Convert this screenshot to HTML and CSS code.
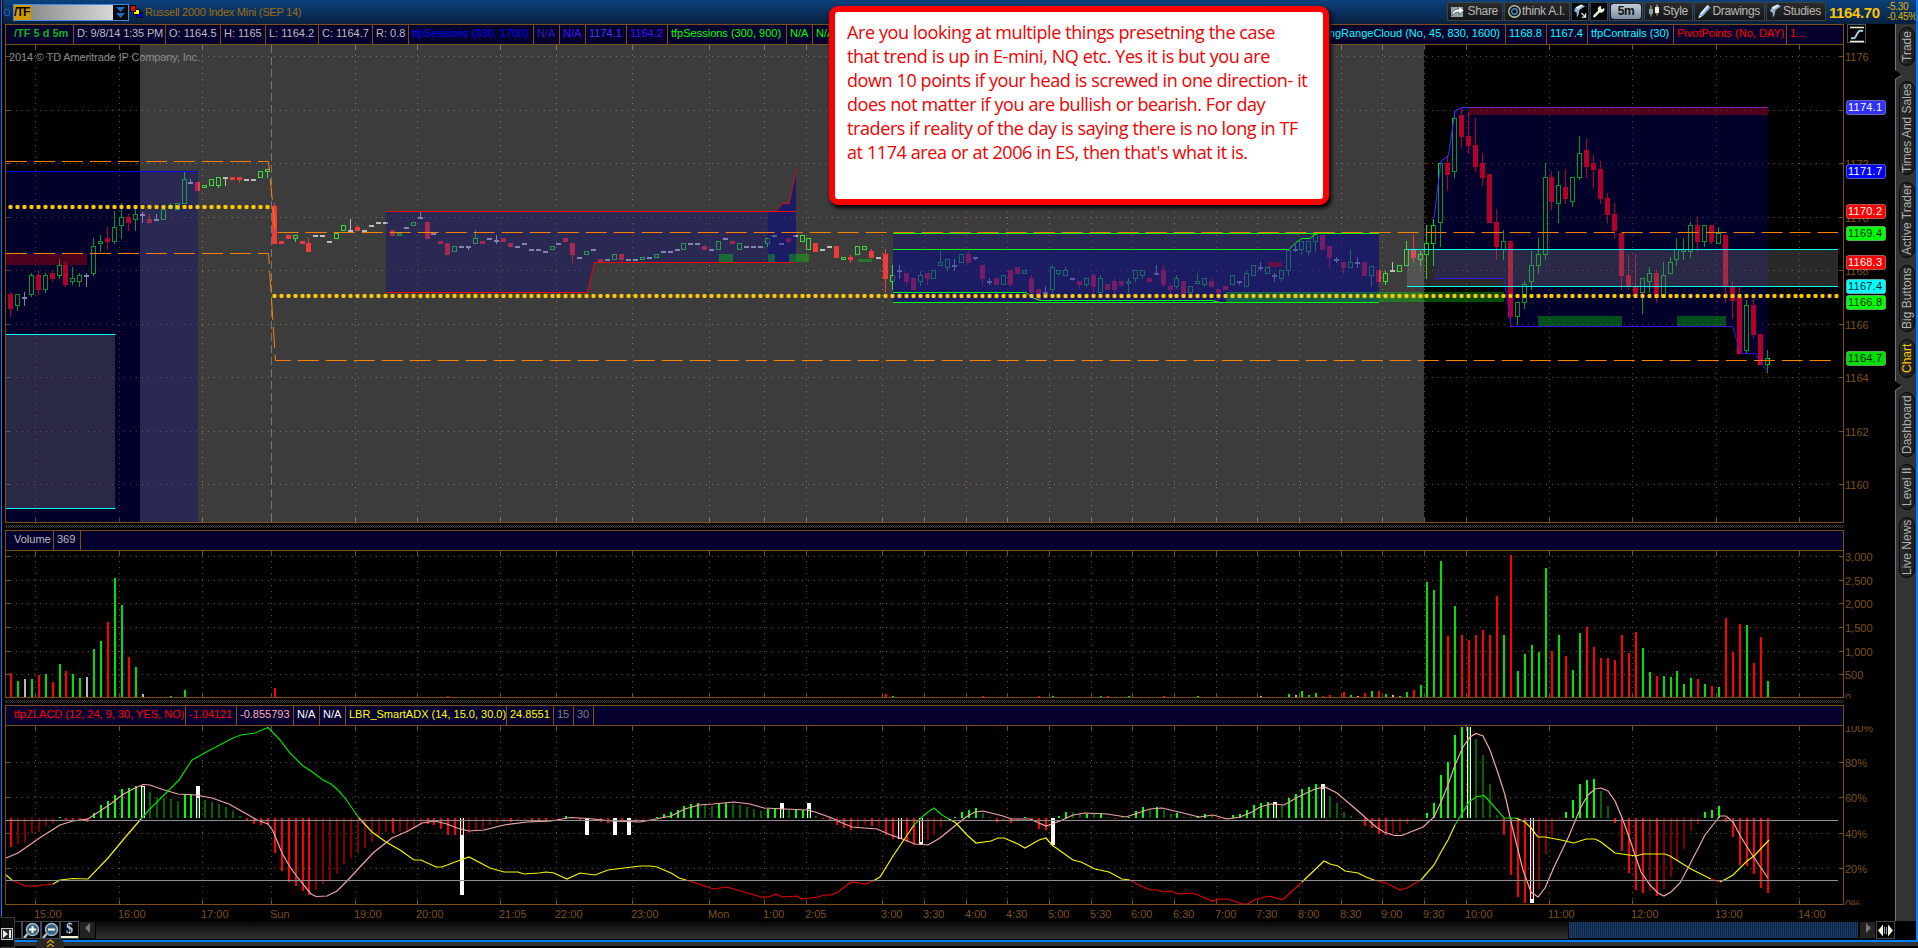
FILE: index.html
```html
<!DOCTYPE html>
<html lang="en">
<head>
  <meta charset="UTF-8" />
  <meta name="viewport" content="width=device-width, initial-scale=1.0"/>
  <title>/TF - Charts</title>
  <link rel="stylesheet" href="styles.css">
</head>
<body>
  <div class="window">
    <div class="topbar">
      <span class="pin"></span>
      <div class="symbol-box">
        <span class="symbol">/TF</span>
        <span class="symbol-fill"></span>
        <span class="symbol-drop">
          <svg width="15" height="15" viewBox="0 0 15 15"><path d="M3 2h9l-4.500 5zM3 8h9l-4.500 5z" fill="#1d6cc4"/></svg>
        </span>
      </div>
      <svg class="link-icon" width="13" height="14" viewBox="0 0 13 14">
        <rect x="6.500" y="7.500" width="6" height="5" fill="#0000ff" stroke="#000"/>
        <rect x="3.500" y="4.500" width="6" height="5" fill="#ffff00" stroke="#000"/>
        <rect x=".5" y=".5" width="5" height="6" fill="#ff0000" stroke="#000"/>
      </svg>
      <span class="title">Russell 2000 Index Mini (SEP 14)</span>

      <div class="toolbar">
        <div class="tool tool-share">
          <svg width="15" height="14" viewBox="0 0 15 14"><rect x="1" y="3" width="12" height="10" fill="#8fa3ad"/><path d="M2 12c0-5 3-7 7-7V2l5 4.500-5 4V8C6 8 4 9 2 12z" fill="#fff" stroke="#333" stroke-width=".6"/></svg>
          <span>Share</span>
        </div>
        <div class="tool tool-think">
          <svg width="15" height="15" viewBox="0 0 15 15"><circle cx="7.500" cy="7.500" r="5.800" fill="#101820" stroke="#b9c4a8" stroke-width="1.400"/><circle cx="7.500" cy="7.500" r="2.800" fill="none" stroke="#4f88b8" stroke-width="1.400"/></svg>
          <span>think A.I.</span>
        </div>
        <div class="tool tool-icon">
          <svg width="15" height="16" viewBox="0 0 15 16"><path d="M3 4l6-3 4 2-6 4-1 5-2 3v-5l-3-2z" fill="#8fb4cc"/><path d="M3 4l6-3 2 1-6 4z" fill="#e4eef4"/><path d="M9 10l4 4M13.500 10.500v4h-4" stroke="#eee" stroke-width="1.300" fill="none"/></svg>
        </div>
        <div class="tool tool-icon">
          <svg width="15" height="15" viewBox="0 0 15 15"><path d="M2.500 12.500L8 7" stroke="#dfe3d4" stroke-width="2.800" stroke-linecap="round"/><path d="M13 3.500A3.600 3.600 0 1 1 9.800 1.500L9.500 4l1.500 1.200z" fill="#eceee0"/></svg>
        </div>
        <div class="tool tool-period"><span>5m</span></div>
        <div class="tool tool-style">
          <svg width="14" height="14" viewBox="0 0 14 14"><path d="M4 1.500v11M10 .5v11" stroke="#b8cbb0"/><rect x="2" y="5" width="4" height="5" fill="#87a3b4"/><rect x="8" y="3" width="4" height="6" fill="#f0f2dc"/></svg>
          <span>Style</span>
        </div>
        <div class="tool tool-drawings">
          <svg width="15" height="15" viewBox="0 0 15 15"><path d="M1.500 14l1.500-4.500L10.500 1 13.500 3.500 6 12z" fill="#7fb0dd"/><path d="M3 9.500L10.500 1l1.500 1.200-7.500 8.500z" fill="#dcebf7"/><path d="M1.500 14l1-3 2 1.800z" fill="#fff"/></svg>
          <span>Drawings</span>
        </div>
        <div class="tool tool-studies">
          <svg width="15" height="16" viewBox="0 0 15 16"><path d="M3 4l6-3 4 2-6 4-1 5-2 3v-5l-3-2z" fill="#8fb4cc"/><path d="M3 4l6-3 2 1-6 4z" fill="#e4eef4"/></svg>
          <span>Studies</span>
        </div>
      </div>
      <span class="last-price">1164.70</span>
      <span class="change">-5.30<br>-0.45%</span>
    </div>

    <div class="main">
      <div class="charts">
        <div class="panel-head head-price">
          <span class="c-symbol">/TF 5 d 5m</span>
          <span class="tight">D: 9/8/14 1:35 PM</span>
          <span>O: 1164.5</span>
          <span>H: 1165</span>
          <span>L: 1164.2</span>
          <span>C: 1164.7</span>
          <span>R: 0.8</span>
          <span class="c-blue">tfpSessions (930, 1700)</span>
          <span class="c-navy">N/A</span>
          <span class="c-violet">N/A</span>
          <span class="c-bright">1174.1</span>
          <span class="c-violet">1164.2</span>
          <span class="c-green">tfpSessions (300, 900)</span>
          <span class="c-green">N/A</span>
          <span class="c-green c-wide"><i>N/A</i><i class="c-cyan">OpeningRangeCloud (No, 45, 830, 1600)</i></span>
          <span class="c-cyan">1168.8</span>
          <span class="c-cyan">1167.4</span>
          <span class="c-cyan">tfpContrails (30)</span>
          <span class="c-red">PivotPoints (No, DAY)</span>
          <span class="c-red">1...</span>
        </div>
        <svg id="price" class="plot" width="1892" height="478" viewBox="3 45 1892 478"></svg>
        <div class="splitter"></div>

        <div class="panel-head head-volume">
          <span>Volume</span>
          <span>369</span>
          <span></span>
        </div>
        <svg id="volume" class="plot" width="1892" height="147" viewBox="3 551 1892 147"></svg>
        <div class="splitter"></div>

        <div class="panel-head head-study">
          <span class="c-red">tfpZLACD (12, 24, 9, 30, YES, NO)</span>
          <span class="c-red">-1.04121</span>
          <span class="c-pink">-0.855793</span>
          <span class="c-white">N/A</span>
          <span class="c-white">N/A</span>
          <span class="c-yellow">LBR_SmartADX (14, 15.0, 30.0)</span>
          <span class="c-yellow">24.8551</span>
          <span class="c-gray">15</span>
          <span class="c-gray">30</span>
          <span></span>
        </div>
        <svg id="study" class="plot" width="1892" height="195" viewBox="3 726 1892 195"></svg>

        <div class="scale-button">
          <svg width="18" height="19" viewBox="0 0 18 19"><path d="M2 2.500h14M2 16.500h14" stroke="#f4f4d8" stroke-width="1.600"/><path d="M3 13c5 1 4-1 6-4s2-4 6-3" fill="none" stroke="#a9d0e4" stroke-width="2"/></svg>
        </div>
      </div>

      <div class="sidebar">
        <div class="tab tab-trade">Trade</div>
        <div class="tab tab-times">Times And Sales</div>
        <div class="tab tab-active">Active Trader</div>
        <div class="tab tab-big">Big Buttons</div>
        <div class="tab tab-chart">Chart</div>
        <div class="tab tab-dash">Dashboard</div>
        <div class="tab tab-level">Level II</div>
        <div class="tab tab-news">Live News</div>
        <svg class="notch notch-top" width="8" height="10" viewBox="0 0 8 10"><path d="M0 0l7 5-7 4z" fill="#000"/><path d="M1 9l6-4" stroke="#777"/></svg>
        <svg class="notch notch-mid" width="8" height="10" viewBox="0 0 8 10"><path d="M0 0l7 5-7 4z" fill="#000"/><path d="M1 9l6-4" stroke="#777"/></svg>
      </div>
    </div>

    <div class="scrollbar">
      <span class="zoom-btn zoom-cut"></span>
      <span class="zoom-btn">
        <svg width="17" height="17" viewBox="0 0 17 17"><path d="M4.500 12L1 16" stroke="#b8c8d4" stroke-width="2.400"/><circle cx="9.500" cy="7.500" r="6" fill="#356488" stroke="#a4bccc" stroke-width="1.400"/><path d="M9.500 4v7M6 7.500h7" stroke="#ffffd8" stroke-width="2"/></svg>
      </span>
      <span class="zoom-btn">
        <svg width="17" height="17" viewBox="0 0 17 17"><path d="M4.500 12L1 16" stroke="#b8c8d4" stroke-width="2.400"/><circle cx="9.500" cy="7.500" r="6" fill="#356488" stroke="#a4bccc" stroke-width="1.400"/><path d="M6 7.500h7" stroke="#ffffd8" stroke-width="2"/></svg>
      </span>
      <span class="zoom-btn zoom-dollar">$</span>
      <span class="arrow-btn"><svg width="6" height="10" viewBox="0 0 6 10"><path d="M5 0v10L0 5z" fill="#777"/></svg></span>
      <span class="track"></span>
      <span class="thumb"></span>
      <span class="arrow-btn"><svg width="6" height="10" viewBox="0 0 6 10"><path d="M1 0v10l5-5z" fill="#777"/></svg></span>
      <span class="zoom-btn zoom-split">
        <svg width="15" height="13" viewBox="0 0 15 13"><path d="M0 6.500L5 .5v12zM15 6.500l-5-6v12z" fill="#eef6dc"/><path d="M6.500 3v7M8.500 3v7" stroke="#7aa4c8"/></svg>
      </span>
    </div>
    <div class="footer"></div>

    <div class="collapse">
      <svg width="12" height="12" viewBox="0 0 12 12"><rect x=".5" y=".5" width="11" height="11" fill="#222" stroke="#ccc"/><path d="M2 2l5 4-5 4z" fill="#eee"/><path d="M9 2v8" stroke="#eee" stroke-width="2"/></svg>
    </div>
    <div class="drawer">
      <svg width="9" height="8" viewBox="0 0 9 8"><path d="M1 4l3.500-3L8 4M1 8l3.500-3L8 8" stroke="#d9a400" stroke-width="1.300" fill="none"/></svg>
    </div>

    <div class="note">
      Are you looking at multiple things presetning the case<br>
      that trend is up in E-mini, NQ etc. Yes it is but you are<br>
      down 10 points if your head is screwed in one direction- it<br>
      does not matter if you are bullish or bearish. For day<br>
      traders if reality of the day is saying there is no long in TF<br>
      at 1174 area or at 2006 in ES, then that's what it is.
    </div>
  </div>

  <script src="chart.js"></script>
</body>
</html>
```
FILE: styles.css
```css
body {
  margin: 0;
  background-color: #000;
  font-family: "Liberation Sans", Arial, sans-serif;
  font-size: 11px;
  color: #bdbdbd;
  overflow: hidden;
}
.window {
  position: relative;
  width: 1918px;
  height: 948px;
  box-sizing: border-box;
  border-left: 1px solid #000;
  display: flex;
  flex-direction: column;
  overflow: hidden;
}
.topbar {
  height: 24px;
  flex: none;
  display: flex;
  align-items: center;
  margin-left: 2px;
  background: linear-gradient(#0b417c, #0a2d58 60%, #071f3d);
  white-space: nowrap;
}
.pin {
  width: 4px;
  height: 5px;
  margin-left: 1px;
  border: 1px solid #1565b8;
  border-radius: 2px;
}
.symbol-box {
  display: flex;
  width: 114px;
  height: 15px;
  margin-left: 3px;
  border: 1px solid #3f8be0;
}
.symbol {
  width: 17px;
  background-color: #d09a00;
  color: #000;
  font-size: 12px;
  font-weight: bold;
  line-height: 15px;
  letter-spacing: -0.8px;
}
.symbol-fill {
  flex: 1;
  background: linear-gradient(90deg, #8c8c8c, #d8d8d8);
}
.symbol-drop {
  width: 15px;
  background-color: #0a0a0a;
}
.symbol-drop svg {
  display: block;
}
.link-icon {
  margin-left: 1px;
}
.title {
  margin-left: 2px;
  width: 160px;
  color: #a06d0c;
  letter-spacing: -0.25px;
}
.toolbar {
  display: flex;
  gap: 1px;
  margin-left: auto;
  height: 19px;
  padding-bottom: 2px;
}
.tool {
  box-sizing: border-box;
  height: 19px;
  display: flex;
  align-items: center;
  justify-content: space-between;
  padding: 0 4px 0 2px;
  border: 1px solid #3c4148;
  background: linear-gradient(#2a2a2a, #161616);
  font-size: 12px;
  letter-spacing: -0.3px;
  color: #b8b8b8;
}
.tool-share {
  width: 56px;
}
.tool-think {
  width: 66px;
}
.tool-icon {
  width: 18px;
  padding: 0 1px;
  background: #000;
}
.tool-period {
  width: 34px;
  padding: 1px;
}
.tool-period span {
  flex: 1;
  border-radius: 3px;
  background: linear-gradient(#c2ccd6, #7d8fa2);
  color: #111;
  font-weight: bold;
  text-align: center;
  line-height: 15px;
}
.tool-style {
  width: 49px;
}
.tool-drawings {
  width: 71px;
}
.tool-studies {
  width: 60px;
}
.last-price {
  width: 54px;
  margin-left: 3px;
  color: #ffc400;
  font-size: 15px;
  font-weight: bold;
  letter-spacing: -0.4px;
}
.change {
  width: 31px;
  margin-left: 4px;
  color: #e0b000;
  font-size: 10px;
  line-height: 10px;
  letter-spacing: -0.3px;
}
.main {
  flex: none;
  height: 897px;
  margin-left: 2px;
  display: flex;
}
.charts {
  position: relative;
  width: 1892px;
  background-color: #000;
}
.plot {
  display: block;
}
.panel-head {
  display: grid;
  box-sizing: border-box;
  width: 1839px;
  height: 21px;
  margin-left: 2px;
  border: 1px solid #7c4f1a;
  background-color: #05002d;
  line-height: 16px;
  white-space: nowrap;
  overflow: hidden;
}
.panel-head span {
  padding-left: 3px;
  border-right: 1px solid #7c4f1a;
  overflow: hidden;
}
.panel-head span:first-child {
  padding-left: 8px;
}
.panel-head span:last-child {
  border-right: none;
}
.panel-head .tight {
  letter-spacing: -0.15px;
}
.panel-head i {
  font-style: normal;
}
.head-price {
  grid-template-columns: 68px 92px 55px 45px 53px 54px 36px 125px 26px 26px 41px 41px 119px 26px 693px 41px 41px 86px 113px 1fr;
}
.head-volume {
  grid-template-columns: 48px 27px 1fr;
}
.head-study {
  grid-template-columns: 180px 51px 57px 26px 26px 161px 47px 20px 20px 1fr;
}
.c-wide {
  display: flex;
  justify-content: space-between;
  padding-right: 5px;
}
.c-symbol {
  color: #10b020;
  font-weight: bold;
}
.c-blue {
  color: #0000ff;
}
.c-navy {
  color: #2222b8;
}
.c-violet {
  color: #3c14ff;
}
.c-bright {
  color: #3a3aff;
}
.c-green {
  color: #00ff00;
}
.c-cyan {
  color: #00ffff;
}
.c-red {
  color: #ff0000;
}
.c-pink {
  color: #ffb0b0;
}
.c-white {
  color: #fff;
}
.c-yellow {
  color: #ffff00;
}
.c-gray {
  color: #808080;
}
.splitter {
  height: 3px;
  width: 1839px;
  margin: 0 0 0 2px;
  padding: 0;
  border-top: 2px solid #000;
  border-bottom: 2px solid #000;
  background: repeating-conic-gradient(#3c3c3c 0 25%, #000 0 50%) 0 0 / 2px 2px;
}
.scale-button {
  position: absolute;
  left: 1844px;
  top: 0;
  width: 17px;
  height: 17px;
  border: 1px solid #4a5560;
  background-color: #000;
}
.scale-button svg {
  display: block;
}
.sidebar {
  position: relative;
  box-sizing: border-box;
  width: 21px;
  padding-top: 3px;
  border-left: 1px solid #777;
  background-color: #333;
}
.tab {
  box-sizing: border-box;
  width: 16px;
  margin-left: 3px;
  border: 1px solid #080808;
  border-radius: 8px;
  background: linear-gradient(90deg, #1c1c1c, #2b2b2b);
  color: #b0b0b0;
  font-size: 12px;
  line-height: 14px;
  text-align: center;
  white-space: nowrap;
  writing-mode: vertical-rl;
  transform: rotate(180deg);
}
.tab-trade {
  height: 39px;
  margin-bottom: 15px;
}
.tab-times {
  height: 94px;
  margin-bottom: 7px;
}
.tab-active {
  height: 76px;
  margin-bottom: 7px;
}
.tab-big {
  height: 67px;
  margin-bottom: 7px;
}
.tab-chart {
  height: 39px;
  margin-bottom: 14px;
  color: #ffc800;
}
.tab-dash {
  height: 65px;
  margin-bottom: 7px;
}
.tab-level {
  height: 46px;
  margin-bottom: 7px;
}
.tab-news {
  height: 61px;
}
.notch {
  position: absolute;
  left: -1px;
}
.notch-top {
  top: 46px;
}
.notch-mid {
  top: 357px;
}
.scrollbar {
  flex: none;
  display: flex;
  height: 19px;
  margin-left: 14px;
  width: 1880px;
  background-color: #000;
}
.zoom-btn {
  box-sizing: border-box;
  width: 19px;
  height: 18px;
  border: 1px solid #3c4854;
  background-color: #000;
  overflow: hidden;
}
.zoom-cut {
  width: 7px;
  border-left: none;
}
.zoom-dollar {
  color: #a8cce8;
  font-family: "Liberation Serif", "Times New Roman", serif;
  font-size: 14px;
  font-weight: bold;
  line-height: 14px;
  text-align: center;
  box-shadow: inset 0 -3px 0 -1px #f0f0d8;
}
.zoom-split svg {
  margin: 2px 1px;
}
.arrow-btn {
  width: 15px;
  height: 16px;
  margin: 1px 1px 0;
  background-color: #222;
  text-align: center;
  line-height: 15px;
}
.track {
  flex: 1;
  height: 18px;
  background: linear-gradient(#050505, #333);
}
.thumb {
  width: 289px;
  height: 16px;
  margin: 1px 1px 0;
  background: repeating-linear-gradient(90deg, #1c3f6c 0 1px, #0d2440 1px 2px);
}
.footer {
  flex: none;
  height: 4px;
  margin-left: 14px;
  border-top: 2px solid #0080ff;
  border-bottom: 2px solid #000;
  background-color: #333;
}
.window::before,
.window::after {
  content: "";
  position: absolute;
  top: 0;
  width: 1px;
  height: 917px;
  background-color: #0080ff;
}
.window::before {
  left: 0;
}
.window::after {
  right: 0;
  width: 2px;
  height: 942px;
}
.collapse {
  position: absolute;
  left: -1px;
  top: 917px;
  width: 13px;
  height: 29px;
  border: 1px solid #3a3a3a;
  background-color: #0a0a0a;
}
.collapse svg {
  margin-top: 10px;
}
.drawer {
  position: absolute;
  left: 35px;
  top: 939px;
  width: 28px;
  height: 9px;
  border-radius: 5px 5px 0 0;
  background-color: #262626;
  text-align: center;
  line-height: 9px;
}
.note {
  position: absolute;
  left: 828px;
  top: 6px;
  box-sizing: border-box;
  width: 500px;
  height: 199px;
  padding: 8px 0 0 12px;
  border: 6px solid #ff0000;
  border-radius: 9px;
  background-color: #fff;
  box-shadow: 2px 3px 4px #000;
  color: #f00000;
  font-family: "Open Sans", "Noto Sans", sans-serif;
  font-size: 18px;
  line-height: 24px;
  letter-spacing: -0.4px;
  white-space: nowrap;
}
text {
  font-family: "Liberation Sans", Arial, sans-serif;
  font-size: 11px;
}
.axis-text {
  fill: #7f5217;
}
.mark {
  fill: #8c8c8c;
}
.crisp {
  shape-rendering: crispEdges;
}
```
FILE: chart.js
```js
const NS = "http://www.w3.org/2000/svg";
const BROWN = "#7c4f1a";
const RIGHT = 1843.5;

const COLORS = {
  r: "#ff0000",
  g: "#00e000",
  w: "#b8b8b8",
  d: "#006400",
  m: "#800000"
};

function add(parent, tag, attrs, text) {
  const el = document.createElementNS(NS, tag);
  for (const key in attrs) el.setAttribute(key, attrs[key]);
  if (text !== undefined) el.textContent = text;
  parent.appendChild(el);
  return el;
}

function rect(parent, x1, y1, x2, y2, fill) {
  add(parent, "rect", { x: x1, y: y1, width: x2 - x1, height: y2 - y1, fill: fill, class: "crisp" });
}

function line(parent, points, stroke, extra) {
  return add(parent, "polyline", Object.assign({ points: points, fill: "none", stroke: stroke }, extra || {}));
}

function barX(i) {
  return Math.floor(10.4 + i * 6.944);
}

const timeTicks = [
  [35.5, "15:00"], [119.5, "16:00"], [202.5, "17:00"], [271.5, "Sun"], [355.5, "19:00"], [417.5, "20:00"],
  [500.5, "21:05"], [556.5, "22:00"], [632.5, "23:00"], [709.5, "Mon"], [764.5, "1:00"], [806.5, "2:05"],
  [882.5, "3:00"], [924.5, "3:30"], [966.5, "4:00"], [1007.5, "4:30"], [1049.5, "5:00"], [1091.5, "5:30"],
  [1132.5, "6:00"], [1174.5, "6:30"], [1216.5, "7:00"], [1257.5, "7:30"], [1299.5, "8:00"], [1341.5, "8:30"],
  [1382.5, "9:00"], [1424.5, "9:30"], [1466.5, "10:00"], [1549.5, "11:00"], [1632.5, "12:00"], [1716.5, "13:00"],
  [1799.5, "14:00"]
];

// frame, dotted grid, ticks and right hand labels of one panel
function drawGrid(svg, top, bottom, levels, dayLine) {
  levels.forEach(([y, label]) => {
    if (label !== "0" && label !== "0%" && label !== "100%") {
      line(svg, `16,${y} 1830,${y}`, BROWN, { "stroke-dasharray": "1 5", class: "crisp" });
      line(svg, `6,${y} 11,${y}`, BROWN, { class: "crisp" });
      line(svg, `1839,${y} 1843,${y}`, BROWN, { class: "crisp" });
    }
    add(svg, "text", { x: 1845, y: y + 4.5, class: "axis-text" }, label);
  });
  timeTicks.forEach(([x, label]) => {
    if (label === "Sun" && dayLine) {
      line(svg, `${x},${top} ${x},${bottom}`, "#555", { "stroke-dasharray": "8 4", class: "crisp" });
    } else {
      line(svg, `${x},${top + 4} ${x},${bottom}`, BROWN, { "stroke-dasharray": "1 5", class: "crisp" });
    }
    line(svg, `${x},${top} ${x},${top + 5}`, BROWN, { class: "crisp" });
    line(svg, `${x},${bottom - 4} ${x},${bottom}`, BROWN, { class: "crisp" });
  });
}

function drawFrame(svg, top, bottom) {
  line(svg, `5.5,${top} 5.5,${bottom} ${RIGHT},${bottom} ${RIGHT},${top}`, BROWN, { class: "crisp" });
}

/* ---------- price ---------- */

// colour, then high / body top / body bottom / low, or only the body
const candles = `r 292 294 309 317|g 294 294 306 311|w 292 297 299 306|g 273 275 295 297|r 270 275 290 295|g 273 275 290 293
r 270 273 279 282|g 259 265 276 279|r 262 265 285 287|g 267 278 282 285|g 273 275 282 287|w 273 275 277 287
g 238 246 274 276|g 235 241 244 252|r 227 238 242 250|g 211 227 242 244|g 203 217 226 239|r 214 217 223 231
g 206 214 220 231|w 212 214 216 223|r 214 219 223 223|w 214 219 221 221|g 209 220|g 203 205 209 209
g 203 210|g 172 179 204 204|w 179 182 184 184|r 182 191|g 185 188|g 179 186
g 177 177 186 188|w 177 177 179 186|r 177 180|r 177 177 180 183|w 179 181|w 179 181
g 171 178|g 169 169 172 178|r 203 206 244 244|r 241 244|r 235 239|g 235 235 239 242
r 241 244|r 238 243 252 252|w 235 237|w 235 237|w 241 243|g 233 239
g 225 231|w 219 230 232 232|r 225 227 231 231|w 230 232|w 225 227|w 222 224
w 222 224|r 230 236|g 233 236|w 227 229|g 222 226|w 212 217 219 219
r 222 239|w 233 235|r 241 244|r 243 255|g 246 252|w 246 248
w 246 246 248 250|g 230 238 244 244|r 241 244|w 238 240|w 235 240 242 244|r 238 242
r 243 247|w 246 248|w 243 245|w 249 251|w 249 251|w 251 253
g 246 250|w 243 245|r 238 242|r 243 243 255 263|w 257 259|g 251 255
w 249 251|r 259 262|w 259 261|g 254 260|r 254 254 260 262|w 259 261
w 259 261|g 257 260|w 257 259|g 254 258|w 251 253|w 251 253
w 249 251|g 243 250|w 243 245|w 243 245|r 246 250|w 249 251
g 241 250|w 238 240|r 241 244|g 243 250|w 246 248|w 246 248
w 246 248|g 238 238 244 247|w 235 237|w 243 245|r 238 238 242 244|w 235 237
g 235 242|g 238 250|r 243 252|w 249 251|w 246 248|r 246 258
g 257 260|r 255 257 260 263|g 246 255|g 246 250|r 249 251 258 258|w 257 259
r 249 254 279 293|g 265 275 282 290|w 265 270 272 279|r 273 273 282 287|r 278 290|g 271 275 282 286
r 273 273 279 285|g 270 279|g 251 262 266 266|g 259 259 268 271|w 259 265 267 271|g 254 263
r 251 254 263 263|w 257 257 259 260|r 265 265 279 285|w 278 281 283 285|r 278 285|g 275 285
r 270 270 285 287|r 267 274|g 270 274|r 275 278 293 297|r 289 300|w 286 292 294 294
g 265 267 290 293|g 270 270 274 276|g 267 270 276 276|w 278 280|r 281 281 285 289|g 278 278 285 287
r 273 275 287 293|g 275 278 293 293|r 284 290|r 278 281 290 293|r 281 281 285 287|g 278 281 284 293
g 270 270 279 282|g 270 270 276 279|r 278 282|w 265 273 275 275|r 265 270 285 287|r 284 286 290 294
g 275 278 287 289|r 281 295|g 286 286 293 294|g 273 281 284 284|g 278 278 285 287|r 278 281 287 287
r 289 289 293 302|r 286 290|g 275 285|w 281 281 283 285|g 270 273 287 287|g 265 276
w 262 267 269 271|g 267 274|w 273 275 277 282|g 270 270 279 282|g 250 250 271 276|w 244 249 251 252
g 241 241 250 255|g 241 241 252 255|g 234 234 242 252|r 235 250|r 246 246 258 268|w 257 259 261 263
r 262 262 268 274|g 249 262 268 268|w 257 262 264 268|r 262 276|g 266 266 276 287|r 270 270 282 287
g 271 273 282 285|w 262 270 272 272|g 265 272|g 241 249 266 266|r 235 249 258 263|g 251 254 260 266
g 225 243 255 279|g 219 225 244 266|g 163 163 223 247|r 156 163 175 191|g 111 118 172 178|r 108 115 137 148
r 112 136 146 154|r 118 145 167 172|r 153 163 178 186|r 174 223|r 209 222 247 260|g 230 241 250 260
r 241 241 317 327|g 302 302 317 325|g 281 284 303 309|g 251 265 282 290|g 238 254 266 274|g 163 177 255 260
r 171 177 202 210|g 171 185 204 223|r 169 187 199 204|g 177 177 202 207|g 136 153 178 180|r 139 150 167 178
r 155 163 170 188|r 161 169 199 204|r 193 198 215 223|r 203 214 231 239|r 233 233 276 290|r 254 275 286 290
r 254 286 295 295|g 278 278 293 314|g 267 273 282 293|r 270 273 298 303|g 262 275 298 298|g 257 262 274 274
g 238 249 260 266|g 238 249 252 260|g 222 225 252 258|r 217 225 242 252|g 225 225 242 247|r 225 225 242 244
g 227 233 244 244|r 235 235 286 303|r 281 286 301 319|r 286 297 354 354|g 300 305 351 353|r 297 305 335 338
r 334 365|g 350 358 365 373`.split(/[|\n]/);

function drawPrice() {
  const svg = document.getElementById("price");
  const navy = "rgba(0,0,144,0.3)";
  const cloud = "rgba(135,135,135,0.3)";
  const green = "rgba(0,255,0,0.3)";
  const red = "rgba(255,0,0,0.3)";

  drawGrid(svg, 45, 522, [
    [56.5, "1176"], [110.5, ""], [163.5, "1172"], [217.5, "1170"], [270.5, "1168"],
    [324.5, "1166"], [377.5, "1164"], [431.5, "1162"], [484.5, "1160"]
  ], true);

  candles.forEach((row, i) => {
    const p = row.split(" ");
    const color = COLORS[p[0]];
    const n = p.slice(1).map(Number);
    const [high, top, bottom, low] = n.length === 2 ? [n[0], n[0], n[1], n[1]] : n;
    const x = barX(i);
    rect(svg, x, high, x + 1, top, color);
    rect(svg, x, bottom, x + 1, low, color);
    if (p[0] === "g") {
      add(svg, "rect", { x: x - 1.5, y: top + 0.5, width: 4, height: Math.max(bottom - top - 1, 1), fill: "none", stroke: color, class: "crisp" });
    } else {
      rect(svg, x - 2, top, x + 3, bottom, color);
    }
  });

  // extended hours
  rect(svg, 140, 45, 1424, 522, "rgba(200,200,200,0.3)");

  // day session of the previous day
  rect(svg, 6, 171, 198, 522, navy);
  rect(svg, 6, 334, 115, 509, cloud);
  rect(svg, 6, 254, 87, 265, red);
  line(svg, "6,171.5 198,171.5", "#0000ff");
  line(svg, "6,334.500 115.5,334.500", "#00ffff");
  line(svg, "6,508.5 115.5,508.5", "#00ffff");

  // overnight session
  add(svg, "polygon", { points: "386,211 776,211 782,204 789,203.5 796,169 796,262 595,262 587,292 386,292", fill: navy });
  add(svg, "polygon", { points: "768,211 776,211 782,204 789,203.500 796,169 796,262 768,262", fill: navy });
  line(svg, "386,211.5 796,211.5", "#ff0000");
  line(svg, "776,211.5 782,203.5 789,203.5 796.500,169", "#e01010");
  line(svg, "386,292.5 587.5,292.5 594.5,262.5 796,262.5", "#ff0000");
  [[719, 254, 733], [768, 254, 775], [789, 254, 809], [858, 259, 872]].forEach(b => rect(svg, b[0], b[1], b[2], 262, green));

  // 3:00 - 9:00 session
  rect(svg, 893, 233, 1379, 302, navy);
  add(svg, "polygon", { points: "893,249 1289,249 1302,238 1310,238 1316,233 1379,233 1379,302 893,302", fill: navy });
  rect(svg, 1268, 262, 1282, 267, red);
  rect(svg, 1226, 292, 1504, 302, green);
  line(svg, "893,233.5 1379,233.5", "#00ff00");
  line(svg, "893,249.5 1289,249.5 1296,242.500 1302,238.5 1310,238.5 1316,233.5", "#00ff00");
  line(svg, "893,292.5 1026,292.5 1033,298 1040,300.5 1212,300.5 1218,302", "#00ff00");
  line(svg, "893,302.5 1379,302.5", "#00ff00");

  // current day session
  const upper = "1434,218 1441,161 1448.5,155.5 1455,110.5 1462,107.5 1768,107.5";
  const lower = "1434,278.5 1504,278.5 1511,326.5 1733,326.5 1740,353.5 1755,353.5 1760,362 1768,372";
  add(svg, "polygon", { points: upper + " " + lower.split(" ").reverse().join(" "), fill: navy });
  rect(svg, 1407, 249, 1838, 287, cloud);
  line(svg, upper, "#3434ff");
  line(svg, lower, "#3a10f0");
  rect(svg, 1469, 107, 1768, 115, red);
  rect(svg, 1538, 316, 1622, 326, green);
  rect(svg, 1677, 316, 1726, 326, green);
  line(svg, "1407,249.5 1838,249.5", "#00ffff");
  line(svg, "1407,286.5 1838,286.5", "#00ffff");

  // pivots
  const dash = { "stroke-dasharray": "21 7" };
  line(svg, "6,161.5 268.5,161.5 275.500,232.5 1838,232.5", "#ff8000", dash);
  line(svg, "6,253.5 268.5,253.5 275.5,360.5 1838,360.5", "#ff8000", dash);
  for (let i = 0; i <= 263; i++) {
    const x = barX(i) + 0.5;
    const y = i < 38 ? 207 : 296;
    add(svg, "rect", { x: x - 2, y: y - 2, width: 4, height: 4, rx: 1.2, fill: "#ffc800" });
  }

  add(svg, "text", { x: 9, y: 61, class: "mark", textLength: 191 }, "2014 © TD Ameritrade IP Company, Inc.");
  drawFrame(svg, 45, 522.5);

  [
    [107, "1174.1", "#3030ff", "#fff"], [171, "1171.7", "#0000ff", "#fff"], [211, "1170.2", "#ff0000", "#fff"],
    [233, "1169.4", "#00ff00", "#002000"], [262, "1168.3", "#ff0000", "#fff"], [286, "1167.4", "#00ffff", "#002020"],
    [302, "1166.8", "#00ff00", "#002000"], [358, "1164.7", "#00e000", "#002000"]
  ].forEach(([y, label, bg, fg]) => {
    add(svg, "rect", { x: 1846.5, y: y - 6.5, width: 39, height: 14, rx: 2, fill: bg, stroke: "rgba(255,255,255,0.35)" });
    add(svg, "text", { x: 1848, y: y + 4, fill: fg, textLength: 34 }, label);
  });
}

/* ---------- volume ---------- */

const volume = `0r673 1g681 2w679 3g679 4r675 5g674 6r682 7g664 8r671 9g674 10g678 11w677 12g649 13g641 14r622 15g578 16g605
17r657 18g667 19w694 23g696 25g690 38r688 63r696 126r694 127g696 140r696 148r696 150g696 157g696 158r696 161g696 166r696
171g696 180w696 184g694 185w695 186g691 187g695 188g693 189r696 190r695 192r692 193g695 194w696 195r693 196g691 197r691
198g694 199w695 200g696 201g692 202r690 203g685 204g582 205g590 206g561 207r636 208g606 209r635 210r640 211r635 212r630
213r635 214r596 215g635 216r555 217g671 218g654 219g645 220g652 221g568 222r651 223g635 224r656 225g670 226g633 227r627
228r647 229r658 230r658 231r660 232r635 233r653 234r632 235g648 236g672 237r676 238g676 239g677 240g671 241g684 242g678
243r679 244g684 245r686 246g687 247r618 248r652 249r624 250g625 251r663 252r637 253g681`.split(/\s+/);

function drawVolume() {
  const svg = document.getElementById("volume");
  drawGrid(svg, 551, 697, [
    [556.5, "3,000"], [580.5, "2,500"], [603.5, "2,000"], [627.5, "1,500"], [651.5, "1,000"], [674.5, "500"], [697.5, "0"]
  ]);
  volume.forEach(v => {
    const m = v.match(/(\d+)([rgw])(\d+)/);
    const x = barX(+m[1]);
    rect(svg, x, +m[3], x + 2, 697, COLORS[m[2]]);
  });
  drawFrame(svg, 551, 697.5);
}

/* ---------- studies ---------- */

// colour and bar end, W: white bar with an optional inner bar
const histogram = `r847 m844 m842 m833 m832 m826 m824 g817 r821 r821 r821 r822 g813 g805 g801 g795 g789 g788 g786 W786d787
d792 d797 d798 d799 d801 g795 g794 W786d798 d800 d802 d804 d807 d811 d816 r820 r824 r825 r825 r853 r871 r882 r886 r891 r895
m890 m884 m880 m874 m864 m858 m853 m848 m842 m836 m832 r833 m832 m831 m829 m825 r824 r825 r829 r835 r835 W895m835 m834 m830
m829 m825 m823 m822 r822 m821 m821 r822 r822 r822 m821 m820 g816 d817 r820 W835 m820 r822 r823 W835 r822 W835 m823
m820 m819 g817 g814 g812 g810 g806 g804 g803 d805 d806 g804 g803 d804 d805 d807 d809 d811 g809 g808 W803d809 d810 g810 g810
W803d809 d816 r819 r820 r825 r828 r830 m828 m825 r826 m827 r835 r839 W839m838 r842 r845 W844m842 m840 m835 m827 m819 g817
g812 g810 g808 d813 d817 r822 m821 r823 m820 g817 r820 r829 r830 W845 g816 g812 d812 d814 g814 d814 g813 d817 r819 d817 g817
g811 g807 d809 g807 d810 d814 g813 d817 d817 g816 g814 d816 r819 r819 g815 g814 g810 g805 g803 g802 W802d804 d805 g798 g794
g789 g787 g784 W784d789 d796 d803 d812 d816 m819 r826 r828 r834 r835 m834 m832 m824 m820 m819 g813 g803 g775 g762 g735 g727
W727d727 d739 d755 d784 d815 r835 r875 r897 r903 W903m899 m889 m854 m836 m819 g812 g800 g784 g780 g779 d791 d806 r823 r851
r873 r890 r893 m891 r896 m889 m877 m861 m849 m831 m824 g812 g810 g806 r822 r837 r865 r866 r874 r888 r893`.split(/\s+/);

const signal = `6,858 18,853 41,837 60,825 73,821 88,819 100,811 112,803 122,795 133,789 143,784.5 150,785 161,789 178,794
196,795 212,798 229,804 245,813 257,820 268,824 273,831 282,853 290,867 298,878 311,894 316,896.500 327,896 337,891 347,881 359,868
373,853 392,838 408,831 422,823 435,821 447,824 457,828 469,831 484,830 504,825 527,822 551,821 571,817.5 588,818.5 612,821
640,822 656,819 671,816 685,809 699,805 713,804 734,802 750,804 764,808 807,810 815,812 832,818 840,822 852,827 877,829 891,835
905,840 915,844 928,845 940,838 956,825 966,817 975,812 983,811 1003,816 1011,819 1030,819 1046,826 1060,821 1073,815 1085,813
1107,814 1126,817 1138,813 1150,809 1162,808 1179,812 1199,817 1213,815 1227,819 1240,817 1252,812 1260,807 1271,804 1284,805
1298,797 1315,789 1325,787 1337,793 1358,811 1376,827 1384,832 1394,835.5 1402,835.5 1413,831 1423,827 1434,817 1441,802
1448,785 1455,765 1463,747 1470,737 1476,733.5 1483,736 1490,750 1498,773 1505,795 1513,830 1523,870 1531,892 1538,897 1545,888
1555,865 1568,838 1581,807 1588,795 1595,789 1601,788 1608,791 1615,801 1623,820 1631,843 1641,872 1650,885 1658,893 1664,896
1671,892 1680,883 1688,868 1705,835 1720,816 1726,816 1733,822 1741,837 1751,853 1761,868 1768,878`;

const adx = [
  ["y", "6,875 12,880"],
  ["r", "12,880 25,886 35,886 53,884"],
  ["y", "53,884 60,880 73,878.5 88,879 108,858 128,834 141,819"],
  ["g", "141,819 149,810 165,794 179,780 192,760 212,749 233,738 241,735 255,733 268,727.5 280,740 290,753 303,766 311,771 323,780 331,784 338,790 345,798 359,818"],
  ["y", "359,818 372,832 386,842 400,850 414,860 421,860 436,867 442,867 455,862 469,857 490,868 504,872 518,872 524,874 539,873 546,872 554,873 567,879 580,873 595,875 608,870 640,866 650,866 657,867 671,873 679,878 686,880"],
  ["r", "686,880 699,884 713,889 727,887 761,897 769,897 776,894 782,897 797,896 802,899 818,897 824,895 831,895 838,892 851,882 866,884 873,881"],
  ["y", "873,881 880,877 893,856 914,825"],
  ["g", "914,825 922,817 928,812 934,808 942,815 949,819"],
  ["y", "949,819 956,823 967,835 976,843 991,841 998,838 1004,838 1018,844 1025,848 1039,840 1046,838 1052,845 1066,855 1073,860 1081,862 1095,869 1109,872 1122,879 1130,880"],
  ["r", "1130,880 1137,884 1150,890 1157,890 1164,892 1171,891 1178,894 1192,893 1198,895 1212,901 1220,899 1227,899 1234,901 1242,904 1248,904 1254,900 1269,896 1280,899 1282,900 1288,895 1302,882"],
  ["y", "1302,882 1324,861 1330,864 1338,866 1345,871 1358,873 1366,877 1374,880"],
  ["r", "1374,880 1386,883 1392,886 1400,890 1407,888 1414,884 1421,880"],
  ["y", "1421,880 1434,865 1441,852 1448,840 1455,825"],
  ["g", "1455,825 1463,812 1469,802 1476,797 1484,795.5 1491,803 1504,818 1516,818"],
  ["y", "1516,818 1525,822 1531,828 1538,837 1545,837 1561,840 1574,843 1586,839 1595,839 1601,842 1615,853 1636,856 1643,854 1665,854 1670,856 1678,861 1691,869 1711,879"],
  ["r", "1711,879 1720,882"],
  ["y", "1720,882 1726,879 1733,875 1747,861 1754,856 1769,840"]
];

function drawStudy() {
  const svg = document.getElementById("study");
  const clip = add(add(svg, "defs", {}), "clipPath", { id: "study-clip" });
  add(clip, "rect", { x: 0, y: 726, width: 1900, height: 179 });
  const plot = add(svg, "g", { "clip-path": "url(#study-clip)" });

  drawGrid(plot, 726, 904, [
    [727.5, "100%"], [762.5, "80%"], [797.5, "60%"], [833.5, "40%"], [868.5, "20%"], [903.5, "0%"]
  ]);

  histogram.forEach((h, i) => {
    const x = barX(i);
    const m = h.match(/([a-zW])(\d+)(?:([dm])(\d+))?/);
    const bar = (x1, x2, y, color) => rect(plot, x1, Math.min(818, y), x2, Math.max(818, y), color);
    if (m[1] === "W") {
      bar(x - 1, x + 3, +m[2], "#fff");
      if (m[3]) bar(x, x + 2, +m[4], COLORS[m[3]]);
    } else {
      bar(x, x + 2, +m[2], m[1] === "g" ? "#00ff00" : COLORS[m[1]]);
    }
  });

  line(plot, signal, "#f0a8a8", { "stroke-width": 1.2 });
  const lineColors = { y: "#f5f500", r: "#e60000", g: "#00e000" };
  adx.forEach(([c, pts]) => line(plot, pts, lineColors[c], { "stroke-width": 1.2 }));
  line(plot, "6,820.5 1838,820.5", "#909090");
  line(plot, "6,880.5 1838,880.5", "#909090");
  drawFrame(svg, 726, 904.5);

  timeTicks.forEach(([x, label]) => {
    add(svg, "text", { x: x - 1.5, y: 918, class: "axis-text" }, label);
  });
}

drawPrice();
drawVolume();
drawStudy();
```
